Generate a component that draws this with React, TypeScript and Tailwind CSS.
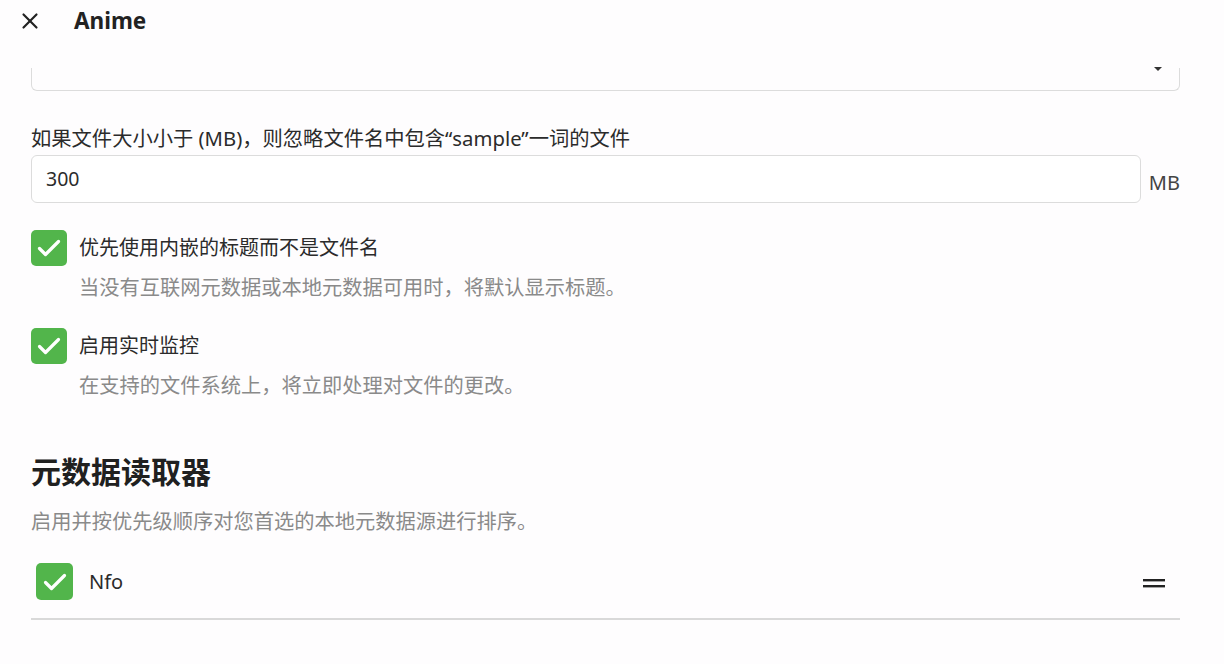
import { X } from 'lucide-react'

function Check({ size = 36 }: { size?: number }) {
  return (
    <div
      className="flex shrink-0 items-center justify-center rounded-[5px] bg-[#52b54b]"
      style={{ width: size, height: size }}
    >
      <svg width="28" height="28" viewBox="0 0 28 28" fill="none">
        <path d="M4.5 14.5l6 6L23.5 7.5" stroke="#fff" strokeWidth="3.2" strokeLinecap="round" strokeLinejoin="round" />
      </svg>
    </div>
  )
}

function CheckOption({ label, desc }: { label: string; desc: string }) {
  return (
    <div className="flex gap-3">
      <Check />
      <div>
        <div className="h-[36px] text-[20px] leading-[36px] text-[#2b2b2b]">{label}</div>
        <div className="mt-[7px] text-[20.25px] leading-[28px] text-[#8a8a8a]">{desc}</div>
      </div>
    </div>
  )
}

export default function App() {
  return (
    <main
      className="min-h-screen bg-[#fefdfe] text-[#222]"
      style={{ fontFamily: '"Noto Sans", "Noto Sans CJK SC", sans-serif' }}
    >
      <header className="h-[68px]">
        <div className="flex h-[42px] items-center">
          <X className="ml-[17px] h-[26px] w-[26px] text-[#222]" strokeWidth={2} />
          <h1 className="ml-[31px] text-[22.5px] font-bold">Anime</h1>
        </div>
      </header>

      <div className="pl-[31px] pr-[44px]">
        <div className="flex h-[23px] items-start justify-end rounded-b-[6px] border border-t-0 border-[#dcdcdc] pr-[17px]">
          <svg width="8" height="5" viewBox="0 0 8 5" className="mt-[-1px]">
            <path d="M0 0h8L4 4z" fill="#333" />
          </svg>
        </div>

        <div className="mt-[33px] text-[20.3px] leading-[28px] text-[#2b2b2b]">
          如果文件大小小于 (MB)，则忽略文件名中包含“sample”一词的文件
        </div>
        <div className="mt-[3px] flex items-center gap-[8px]">
          <div className="flex h-[48px] flex-1 items-center rounded-[6px] border border-[#dcdcdc] bg-white px-[14px] text-[19.5px] text-[#2b2b2b]">
            300
          </div>
          <span className="pt-[8px] text-[20px] text-[#444]">MB</span>
        </div>

        <div className="mt-[27px] flex flex-col gap-[27px]">
          <CheckOption label="优先使用内嵌的标题而不是文件名" desc="当没有互联网元数据或本地元数据可用时，将默认显示标题。" />
          <CheckOption label="启用实时监控" desc="在支持的文件系统上，将立即处理对文件的更改。" />
        </div>

        <h2 className="mt-[53px] text-[30px] font-bold leading-[40px] text-[#202020]">元数据读取器</h2>
        <p className="mt-[15px] text-[20.25px] leading-[28px] text-[#8a8a8a]">
          启用并按优先级顺序对您首选的本地元数据源进行排序。
        </p>

        <div className="mt-[12px] flex items-center border-b-2 border-[#d9d9d9] pt-[16px] pb-[18px] pl-[5px] pr-[15px]">
          <Check size={37} />
          <span className="ml-[16px] flex-1 text-[20px] text-[#2b2b2b]">Nfo</span>
          <svg width="22" height="10" viewBox="0 0 22 10" className="mt-[4px]">
            <rect x="0" y="0" width="22" height="2.4" fill="#222" />
            <rect x="0" y="6" width="22" height="2.4" fill="#222" />
          </svg>
        </div>
      </div>
    </main>
  )
}
